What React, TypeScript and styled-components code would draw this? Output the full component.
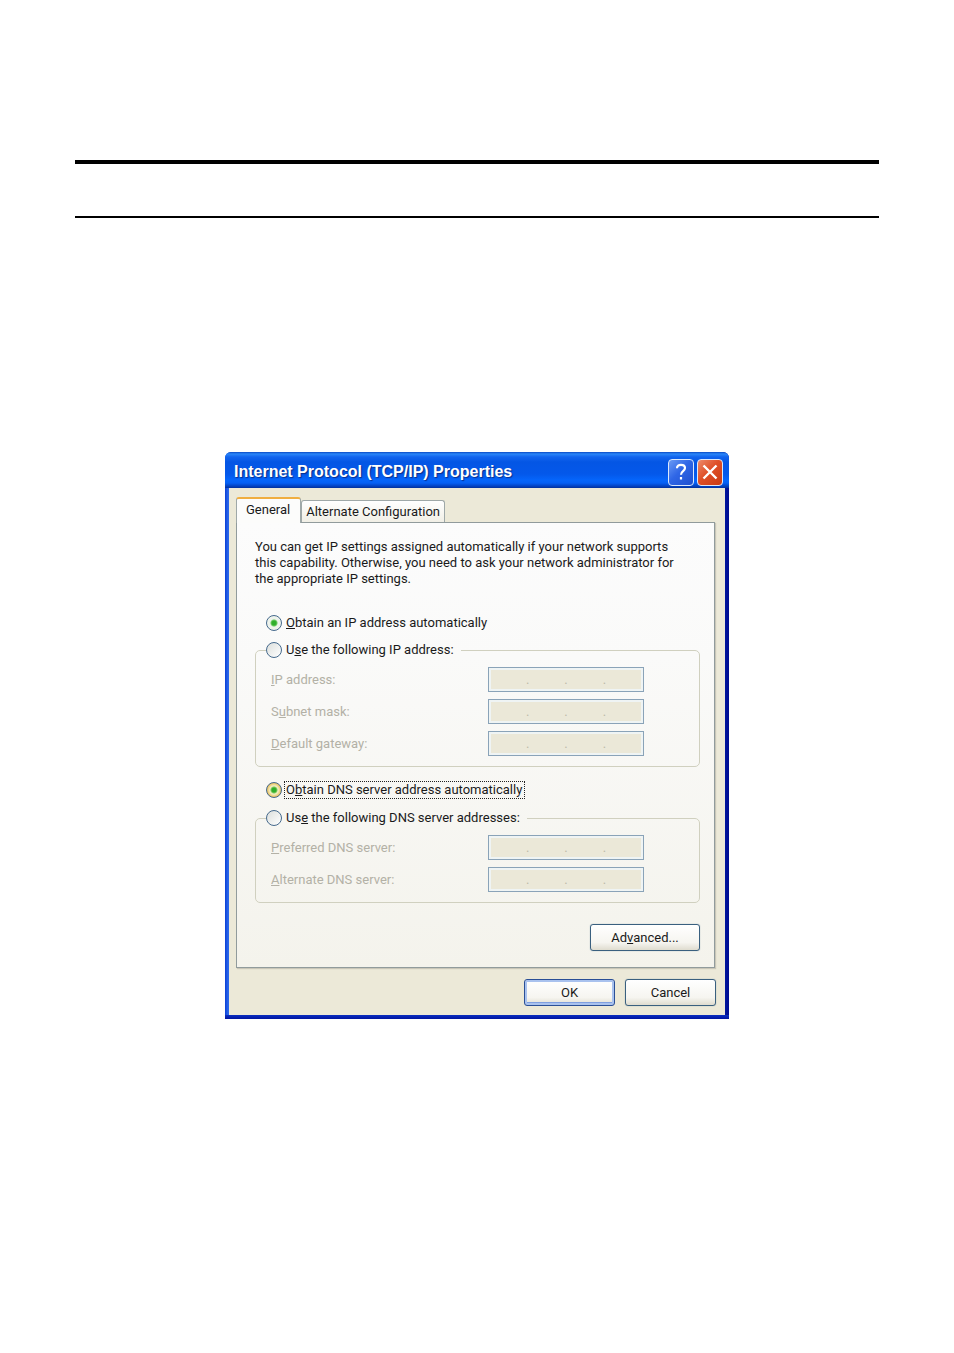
import React, { useState } from "react";
import styled, { createGlobalStyle, css } from "styled-components";

const GlobalStyle = createGlobalStyle`
  *, *::before, *::after { box-sizing: border-box; }
  body {
    margin: 0;
    background: #fff;
    color: #1a1a1a;
    font: 13px/16px Roboto, "Liberation Sans", sans-serif;
  }
  button, input { font: inherit; color: inherit; }
`;

const Page = styled.div`
  padding: 160px 75px 334px;
`;

const PageHeader = styled.header`
  height: 58px;
  margin-bottom: 234px;
  border-top: 4px solid #000;
  border-bottom: 2px solid #000;
`;

const Dialog = styled.section`
  display: flex;
  flex-direction: column;
  max-width: 504px;
  margin: 0 auto;
  border-radius: 6px 6px 0 0;
  background:
    linear-gradient(#0a2fc0, #0014a0) bottom / 100% 4px no-repeat,
    linear-gradient(90deg, #0a3fd6, #2a66ea 3px, #0018a0 99%, #000c90);
  overflow: hidden;
`;

const TitleBar = styled.header`
  display: flex;
  align-items: center;
  gap: 3px;
  height: 36px;
  padding: 6px 6px 2px 9px;
  background: linear-gradient(
    #0a49c4 0, #2a86f8 2px, #1264ee 5px, #0456e4 10px,
    #0458ea 22px, #0565fb 28px, #0560f4 31px, #0343c4 34px, #02309c 36px
  );
`;

const Title = styled.h1`
  flex: 1;
  margin: 0;
  color: #fff;
  font: bold 16px/26px "Liberation Sans", sans-serif;
  text-shadow: 1px 1px 1px #0a2f8c;
`;

const CaptionButton = styled.button<{ $close?: boolean }>`
  display: grid;
  place-items: center;
  width: 26px;
  height: 27px;
  padding: 0;
  border: 1px solid #dbe8fb;
  border-radius: 4px;
  background: ${(p) =>
    p.$close
      ? "linear-gradient(135deg, #ec8a6c, #df5028 45%, #c93a14)"
      : "linear-gradient(135deg, #6a9af4, #2f66e6 45%, #1f50cf)"};

  svg { display: block; }
`;

const Body = styled.div`
  margin: 0 4px 4px;
  padding: 9px 9px 9px 7px;
  background: #ece9d8;
`;

const TabList = styled.div`
  display: flex;
  align-items: flex-end;
`;

const Tab = styled.button<{ $active: boolean }>`
  height: 22px;
  padding: 0 4px;
  border: 1px solid #9fa8a8;
  border-bottom: 0;
  border-radius: 3px 3px 0 0;
  background: linear-gradient(#fff, #f1efe6);
  white-space: nowrap;

  ${(p) =>
    p.$active &&
    css`
      position: relative;
      height: 26px;
      margin-bottom: -1px;
      padding: 0 10px 2px 9px;
      border-top: 2px solid #f0ae40;
      background: #fcfcfb;
    `}
`;

const TabPanel = styled.div`
  margin-right: 1px;
  padding: 16px 14px 16px 18px;
  border: 1px solid #919b9c;
  background: linear-gradient(#fcfcfc, #fafaf9 30%, #f4f3ec);
  box-shadow: 1px 1px 1px #c9c6b8;
`;

const Intro = styled.p`
  margin: 0 0 27px;
`;

const Choice = styled.div`
  display: flex;
  align-items: center;
  gap: 2px;
  height: 18px;
`;

const SoloChoice = styled(Choice)<{ $after: number }>`
  margin: 0 0 ${(p) => p.$after}px 11px;
`;

const Radio = styled.input`
  appearance: none;
  flex: none;
  width: 16px;
  height: 16px;
  margin: 0;
  border: 1px solid #45698c;
  border-radius: 50%;
  background: linear-gradient(135deg, #dcdfdc, #fff);

  &:checked {
    background: radial-gradient(circle, #2fae2b 0 2px, #6ccb62 3px, #eef3ec 4px);
  }
`;

const HotRadio = styled(Radio)`
  &:checked {
    background: radial-gradient(circle, #2fae2b 0 2px, #7fc85c 3px, #f3f0c8 4px, #e9c05c 7px);
  }
`;

const ChoiceLabel = styled.label<{ $focused?: boolean }>`
  padding: 0 2px 0 1px;
  border: 1px dotted ${(p) => (p.$focused ? "#222" : "transparent")};
`;

const Group = styled.fieldset<{ $after: number }>`
  display: grid;
  row-gap: 7px;
  min-width: 0;
  margin: 0 0 ${(p) => p.$after}px;
  padding: 8px 55px 10px 15px;
  border: 1px solid #d0d0bf;
  border-radius: 5px;

  legend {
    margin-left: -5px;
    padding: 0 4px 0 0;
  }
`;

const FieldRow = styled.div`
  display: flex;
  align-items: center;
  justify-content: space-between;
`;

const FieldLabel = styled.label`
  color: #b3b1a6;
`;

const AddressBox = styled.div`
  display: flex;
  align-items: center;
  width: 156px;
  height: 25px;
  padding: 2px;
  border: 1px solid #8aa3b8;
  background: #ebe8d8;
  box-shadow: inset 0 0 0 2px #eff4f4;
  color: #bdbaa9;
`;

const Octet = styled.input`
  flex: 1;
  min-width: 0;
  width: 0;
  height: 16px;
  padding: 0;
  border: 0;
  background: transparent;
  text-align: center;
`;

const PushButton = styled.button<{ $primary?: boolean; $wide?: boolean }>`
  width: ${(p) => (p.$wide ? 110 : 91)}px;
  height: 27px;
  padding: 0;
  border: 1px solid ${(p) => (p.$primary ? "#2a4f96" : "#3a607f")};
  border-radius: 3px;
  background: linear-gradient(#fff, #f6f5f0 70%, #dfdccf);
  box-shadow: ${(p) =>
    p.$primary ? "inset 0 0 0 2px #a9c2ee, inset 0 -3px 0 #7f9fe0" : "0 0 1px #6f8ba3"};
`;

const ButtonRow = styled.div<{ $top: number }>`
  display: flex;
  justify-content: flex-end;
  gap: 10px;
  margin-top: ${(p) => p.$top}px;
`;

const octets = [1, 2, 3, 4];

function AddressField({ id, name, children }: { id: string; name: string; children: React.ReactNode }) {
  return (
    <FieldRow>
      <FieldLabel htmlFor={id}>{children}</FieldLabel>
      <AddressBox role="group" aria-label={name}>
        {octets.map((n) => (
          <React.Fragment key={n}>
            {n > 1 && <span>.</span>}
            <Octet id={n === 1 ? id : undefined} aria-label={`${name} part ${n}`} maxLength={3} disabled />
          </React.Fragment>
        ))}
      </AddressBox>
    </FieldRow>
  );
}

export default function App() {
  const [tab, setTab] = useState("general");
  return (
    <>
      <GlobalStyle />
      <Page>
        <PageHeader />
        <Dialog role="dialog" aria-labelledby="dialog-title">
          <TitleBar>
            <Title id="dialog-title">Internet Protocol (TCP/IP) Properties</Title>
            <CaptionButton type="button" aria-label="Help">
              <svg width="16" height="18" viewBox="0 0 16 18" fill="none" stroke="#fff" strokeWidth="2.2">
                <path d="M4 5.2C4 2.8 5.7 1.8 8 1.8s4 1.2 4 3.3c0 3.2-4 3-4 6.6" />
                <path d="M8 14v2.4" />
              </svg>
            </CaptionButton>
            <CaptionButton type="button" aria-label="Close" $close>
              <svg width="16" height="16" viewBox="0 0 16 16" fill="none" stroke="#fff" strokeWidth="2.4">
                <path d="M1.5 1.5l13 13M14.500 1.500L1.500 14.500" />
              </svg>
            </CaptionButton>
          </TitleBar>
          <Body>
            <TabList role="tablist">
              <Tab role="tab" type="button" aria-selected={tab === "general"} $active={tab === "general"} onClick={() => setTab("general")}>
                General
              </Tab>
              <Tab role="tab" type="button" aria-selected={tab === "alternate"} $active={tab === "alternate"} onClick={() => setTab("alternate")}>
                Alternate Configuration
              </Tab>
            </TabList>
            <TabPanel role="tabpanel">
              <Intro>
                You can get IP settings assigned automatically if your network supports
                <br />
                this capability. Otherwise, you need to ask your network administrator for
                <br />
                the appropriate IP settings.
              </Intro>

              <SoloChoice $after={9}>
                <Radio type="radio" name="ip" id="ip-auto" defaultChecked />
                <ChoiceLabel htmlFor="ip-auto"><u>O</u>btain an IP address automatically</ChoiceLabel>
              </SoloChoice>
              <Group $after={14}>
                <legend>
                  <Choice>
                    <Radio type="radio" name="ip" id="ip-manual" />
                    <ChoiceLabel htmlFor="ip-manual">U<u>s</u>e the following IP address:</ChoiceLabel>
                  </Choice>
                </legend>
                <AddressField id="ip" name="IP address"><u>I</u>P address:</AddressField>
                <AddressField id="mask" name="Subnet mask">S<u>u</u>bnet mask:</AddressField>
                <AddressField id="gateway" name="Default gateway"><u>D</u>efault gateway:</AddressField>
              </Group>

              <SoloChoice $after={10}>
                <HotRadio type="radio" name="dns" id="dns-auto" defaultChecked />
                <ChoiceLabel htmlFor="dns-auto" $focused>O<u>b</u>tain DNS server address automatically</ChoiceLabel>
              </SoloChoice>
              <Group $after={0}>
                <legend>
                  <Choice>
                    <Radio type="radio" name="dns" id="dns-manual" />
                    <ChoiceLabel htmlFor="dns-manual">Us<u>e</u> the following DNS server addresses:</ChoiceLabel>
                  </Choice>
                </legend>
                <AddressField id="dns1" name="Preferred DNS server"><u>P</u>referred DNS server:</AddressField>
                <AddressField id="dns2" name="Alternate DNS server"><u>A</u>lternate DNS server:</AddressField>
              </Group>

              <ButtonRow $top={21}>
                <PushButton type="button" $wide>Ad<u>v</u>anced...</PushButton>
              </ButtonRow>
            </TabPanel>
            <ButtonRow $top={11}>
              <PushButton type="button" $primary>OK</PushButton>
              <PushButton type="button">Cancel</PushButton>
            </ButtonRow>
          </Body>
        </Dialog>
      </Page>
    </>
  );
}
